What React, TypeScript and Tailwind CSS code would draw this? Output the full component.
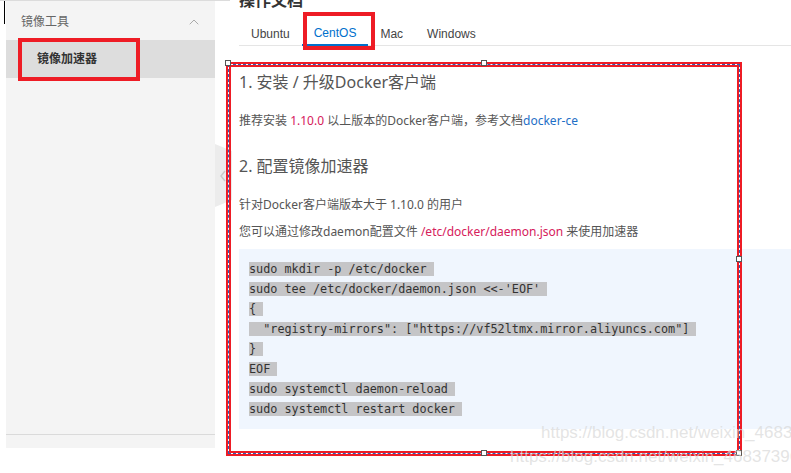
import { ChevronUp } from "lucide-react";

const codeLines = [
  "sudo mkdir -p /etc/docker",
  "sudo tee /etc/docker/daemon.json <<-'EOF'",
  "{",
  '  "registry-mirrors": ["https://vf52ltmx.mirror.aliyuncs.com"]',
  "}",
  "EOF",
  "sudo systemctl daemon-reload",
  "sudo systemctl restart docker",
];

const tabs = ["Ubuntu", "CentOS", "Mac", "Windows"];

function Handle({ className }: { className: string }) {
  return <div className={`absolute w-[6px] h-[6px] bg-white border border-[#555] ${className}`} />;
}

function Sidebar() {
  return (
    <aside className="relative w-[230px] shrink-0 h-[473px] border-t border-[#dcdcdc]">
      <div className="absolute left-[4px] top-0 w-px h-[23px] bg-black" />
      <div className="ml-[6px] w-[209px] h-[447px] bg-[#f4f4f4] flex flex-col">
        <div className="h-[39px] flex items-center justify-between pl-[15px] pr-[13px] pt-[2px] text-[12px] text-[#666]">
          <span>镜像工具</span>
          <ChevronUp className="w-[16px] h-[16px] text-[#aaa]" strokeWidth={1.5} />
        </div>
        <div className="h-[38px] bg-[#dddddd] flex items-center pl-[31px] text-[12px] font-bold text-[#333]">
          镜像加速器
        </div>
        <div className="flex-1" />
        <div className="h-[14px] border-t border-[#dadada]" />
      </div>
      <div className="absolute left-[215px] top-[143px] w-[17px] h-[63px]">
        <svg width="17" height="63" viewBox="0 0 17 63">
          <polygon points="0,0 17,7 17,56 0,63" fill="#ececec" />
          <polyline points="10,27 6,32 10,37" fill="none" stroke="#c9c9c9" strokeWidth="1.5" />
        </svg>
      </div>
      {/* annotation */}
      <div className="absolute left-[18px] top-[37px] w-[122px] h-[43px] border-4 border-[#ee1c25]" />
    </aside>
  );
}

export default function App() {
  return (
    <div
      className="relative w-[791px] h-[473px] overflow-hidden bg-white flex"
      style={{ fontFamily: '"Noto Sans", "Noto Sans CJK SC", sans-serif' }}
    >
      <Sidebar />
      <main className="flex-1 pl-[9px] pt-0">
        <h2 className="-mt-[12px] h-[24px] leading-[24px] text-[16px] font-bold text-[#333]">操作文档</h2>
        <div
          className="mt-[8px] h-[26px] flex border-b border-[#e5e5e5] pt-[2px]"
          style={{ fontFamily: '"Liberation Sans", "Noto Sans CJK SC", sans-serif' }}
        >
          {tabs.map((t) => (
            <div
              key={t}
              className={
                t === "CentOS"
                  ? "relative px-3 h-[24px] flex items-center text-[12px] text-[#0070cc] border-b-2 border-[#0070cc]"
                  : "px-3 h-[24px] flex items-center text-[12px] text-[#444]"
              }
            >
              {t}
            </div>
          ))}
        </div>

        <div className="pt-[24px] text-[#555]">
          <h3 className="h-[24px] leading-[24px] text-[16px]">1. 安装 / 升级Docker客户端</h3>
          <p className="mt-[17px] h-[20px] leading-[20px] text-[12px]">
            推荐安装 <span className="text-[#d6205b]">1.10.0</span> 以上版本的Docker客户端，参考文档
            <span className="text-[#1e6fc6]">docker-ce</span>
          </p>
          <h3 className="mt-[23px] h-[24px] leading-[24px] text-[16px]">2. 配置镜像加速器</h3>
          <p className="mt-[17px] h-[20px] leading-[20px] text-[12px]">针对Docker客户端版本大于 1.10.0 的用户</p>
          <p className="mt-[7px] h-[20px] leading-[20px] text-[12px]">
            您可以通过修改daemon配置文件 <span className="text-[#d6205b]">/etc/docker/daemon.json</span> 来使用加速器
          </p>
          <pre
            className="mt-[7px] h-[180px] bg-[#f0f6fe] pl-[10px] pt-[10px] text-[11.8px] leading-[20px] text-[#333]"
            style={{ fontFamily: '"DejaVu Sans Mono", monospace' }}
          >
            {codeLines.map((l, i) => (
              <div key={i} className="h-[20px]">
                <span className="bg-[#c5c5c7] whitespace-pre">{l + " "}</span>
              </div>
            ))}
          </pre>
        </div>
      </main>

      {/* annotations */}
      <div className="absolute left-[303px] top-[12px] w-[72px] h-[38px] border-4 border-[#ee1c25]" />
      <div className="absolute left-[226px] top-[62px] w-[516px] h-[394px] border-[5px] border-[#ee1c25]">
        <div className="absolute -inset-[3px] border border-white" />
        <div className="absolute -inset-[3px] border border-dashed border-[#2f5db5]" />
      </div>
      <Handle className="left-[225px] top-[60px]" />
      <Handle className="left-[481px] top-[60px]" />
      <Handle className="left-[736px] top-[256px]" />
      <Handle className="left-[481px] top-[450px]" />
      <Handle className="left-[736px] top-[450px]" />

      {/* watermarks */}
      <div
        className="absolute left-[541px] top-[420px] text-[17px] text-[#d8d8d8]/70 whitespace-nowrap"
        style={{ fontFamily: '"Liberation Sans", sans-serif' }}
      >
        https://blog.csdn.net/weixin_46837396
      </div>
      <div
        className="absolute left-[510px] top-[444px] text-[17px] text-[#d8d8d8]/70 whitespace-nowrap"
        style={{ fontFamily: '"Liberation Sans", sans-serif' }}
      >
        https://blog.csdn.net/weixin_46837396
      </div>
    </div>
  );
}
